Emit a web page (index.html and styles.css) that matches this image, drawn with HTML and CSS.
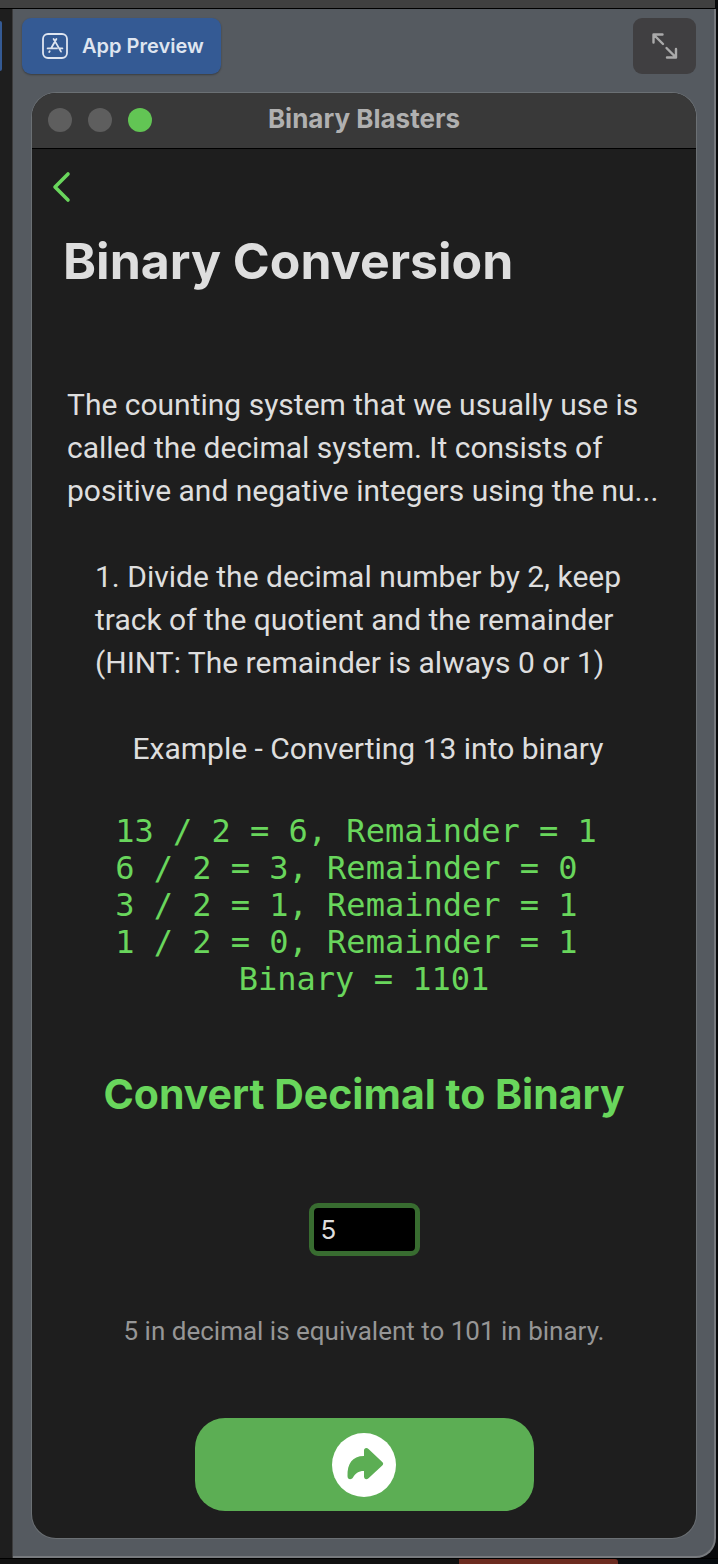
FILE: index.html
```html
<!DOCTYPE html>
<html lang="en">
<head>
<meta charset="utf-8">
<meta name="viewport" content="width=device-width, initial-scale=1">
<title>Binary Blasters</title>
<link rel="stylesheet" href="styles.css">
</head>
<body>
<div class="strip"></div>
<div class="workspace">
  <div class="gutter"><span class="gutter-tab"></span></div>
  <section class="panel">
    <div class="toolbar">
      <button class="preview" type="button">
        <svg width="26" height="26" viewBox="0 0 26 26" fill="none" stroke="currentColor" stroke-width="1.8" stroke-linecap="round" aria-hidden="true">
          <rect x="1" y="1" width="24" height="24" rx="5"/>
          <path d="M11.6 6l2.6 4.4L19 18.6M14.4 6L9.4 14.8M5.6 15.4H15M17.5 15.4H20.4M7.7 18.2L7.2 19"/>
        </svg>
        App Preview
      </button>
      <button class="expand" type="button" aria-label="Expand preview">
        <svg width="26" height="26" viewBox="0 0 26 26" fill="none" stroke="currentColor" stroke-width="2.4" stroke-linecap="round" stroke-linejoin="round" aria-hidden="true">
          <path d="M1.500 9.500V1.500H10.500M2 2L11 11M24 16V24.500H15M23.500 24L14.500 15"/>
        </svg>
      </button>
    </div>
    <main class="window">
      <header class="titlebar">
        <div class="lights"><i></i><i></i><i class="on"></i></div>
        <span class="window-title">Binary Blasters</span>
      </header>
      <div class="content">
        <button class="back" type="button" aria-label="Back">
          <svg width="20" height="32" viewBox="0 0 20 32" fill="none" stroke="currentColor" stroke-width="3.6" stroke-linecap="round" stroke-linejoin="round" aria-hidden="true"><path d="M16 3L3 16L16 29"/></svg>
        </button>
        <h1>Binary Conversion</h1>
        <p class="intro">The counting system that we usually use is<br>called the decimal system. It consists of<br>positive and negative integers using the nu...</p>
        <p class="step">1. Divide the decimal number by 2, keep<br>track of the quotient and the remainder<br>(HINT: The remainder is always 0 or 1)</p>
        <p class="example">Example - Converting 13 into binary</p>
        <div class="work">
          <pre class="division">13 / 2 = 6, Remainder = 1
6 / 2 = 3, Remainder = 0
3 / 2 = 1, Remainder = 1
1 / 2 = 0, Remainder = 1</pre>
          <pre>Binary = 1101</pre>
        </div>
        <h2><label for="decimal">Convert Decimal to Binary</label></h2>
        <input class="decimal" id="decimal" type="text" inputmode="numeric" value="5">
        <p class="result">5 in decimal is equivalent to 101 in binary.</p>
        <button class="next" type="button" aria-label="Next">
          <svg width="64" height="64" viewBox="0 0 64 64" aria-hidden="true">
            <circle cx="32" cy="32" r="32" fill="#fff"/>
            <path fill="#5cae54" d="M32 23V17.500C32 15 34.600 14.200 36.500 16L50 28.800C51.600 30.300 51.600 31.300 50 32.800L36.500 45.200C34.600 47 32 46.200 32 43.600V38C26 38 23.500 40.400 21 44.500C19.500 47 15.500 47 15.500 43C15.200 31 20 23 32 23Z"/>
          </svg>
        </button>
      </div>
    </main>
  </section>
</div>
<footer class="bottom"><span class="bottom-tab"></span></footer>
</body>
</html>
```
FILE: styles.css
```css
* { box-sizing: border-box; }
body {
  margin: 0;
  min-height: 100vh;
  display: flex;
  flex-direction: column;
  background: #08090b;
  color: #dedede;
  font-family: Inter, "Liberation Sans", sans-serif;
}
h1, h2, p, pre { margin: 0; }
button { border: 0; padding: 0; font: inherit; cursor: pointer; }
svg { display: block; }
.strip { height: 9px; background: #404040; border-bottom: 1px solid #000; margin-right: 3px; }
.workspace { flex: 1; display: flex; padding-right: 2px; }
.gutter { width: 13px; background: #1e1e1e; border-right: 1px solid #3c3c3d; padding-top: 12px; }
.gutter-tab { display: block; width: 2px; height: 50px; background: #345a94; border-radius: 0 3px 3px 0; }
.panel {
  flex: 1;
  min-width: 0;
  display: flex;
  flex-direction: column;
  padding: 9px 18px 18px 19px;
  background: #555a60;
  border-right: 2px solid #777a7e;
  border-bottom: 2px solid #777a7e;
  border-radius: 0 0 20px 0;
}
.toolbar { display: flex; justify-content: space-between; margin: 0 0 19px -10px; }
.preview {
  display: flex;
  align-items: center;
  gap: 14px;
  height: 56px;
  padding: 0 17px 0 20px;
  border-radius: 9px;
  background: #345a94;
  color: #dfe5f0;
  font-size: 20px;
  font-weight: 600;
  box-shadow: 0 1px 2px #0005;
}
.expand { width: 63px; height: 56px; display: grid; place-items: center; border-radius: 9px; background: #403f41; color: #aaa; }
.window {
  flex: 1;
  display: flex;
  flex-direction: column;
  border-radius: 24px;
  overflow: hidden;
  background: #1e1e1e;
  box-shadow: 0 0 0 1px #6b7074;
}
.titlebar {
  display: grid;
  grid-template-columns: 1fr auto 1fr;
  align-items: center;
  height: 56px;
  padding: 0 16px 2px;
  background: #393939;
  border-bottom: 1px solid #000;
}
.lights { display: flex; gap: 16px; }
.lights i { width: 24px; height: 24px; border-radius: 50%; background: #5e5e5e; }
.lights .on { background: #62c554; }
.window-title { color: #b0b0b0; font-size: 26px; line-height: 32px; padding-bottom: 2px; font-weight: 700; }
.content { display: flex; flex-direction: column; align-items: center; padding: 22px 20px 27px; }
.back { align-self: flex-start; background: none; color: #69d65c; }
h1 { align-self: flex-start; margin: 28px 0 0 11px; font-size: 50px; line-height: 60px; font-weight: 700; white-space: nowrap; }
p { font-family: Roboto, "Liberation Sans", sans-serif; font-size: 30px; line-height: 43px; white-space: nowrap; }
.intro { align-self: flex-start; margin: 92px 0 0 15px; }
.step { align-self: flex-start; margin: 43px 0 0 43px; }
.example { margin: 43px 0 0 8px; }
.work { display: flex; flex-direction: column; align-items: center; margin-top: 43px; color: #69d65c; }
pre { font: 32px/37px "DejaVu Sans Mono", monospace; }
.division { padding-right: 16px; }
h2 { margin-top: 68px; font-size: 41px; line-height: 56px; font-weight: 700; color: #69d65c; white-space: nowrap; }
.decimal {
  width: 111px;
  height: 53px;
  margin-top: 81px;
  padding: 0 7px;
  border: 5px solid #386c30;
  border-radius: 9px;
  background: #000;
  color: #dedede;
  font: 26px/40px Inter, "Liberation Sans", sans-serif;
  outline: 0;
}
.result { margin-top: 54px; font-size: 26px; color: #969696; }
.next { width: 339px; max-width: 100%; height: 93px; margin-top: 65px; display: grid; place-items: center; border-radius: 30px; background: #5cae54; }
.bottom { height: 6px; border-top: 1px solid #000; background: linear-gradient(90deg, #111 60%, #060a0e); padding-left: 459px; }
.bottom-tab { display: block; width: 159px; height: 5px; background: #6c2b20; border-radius: 0 3px 0 0; }
```
